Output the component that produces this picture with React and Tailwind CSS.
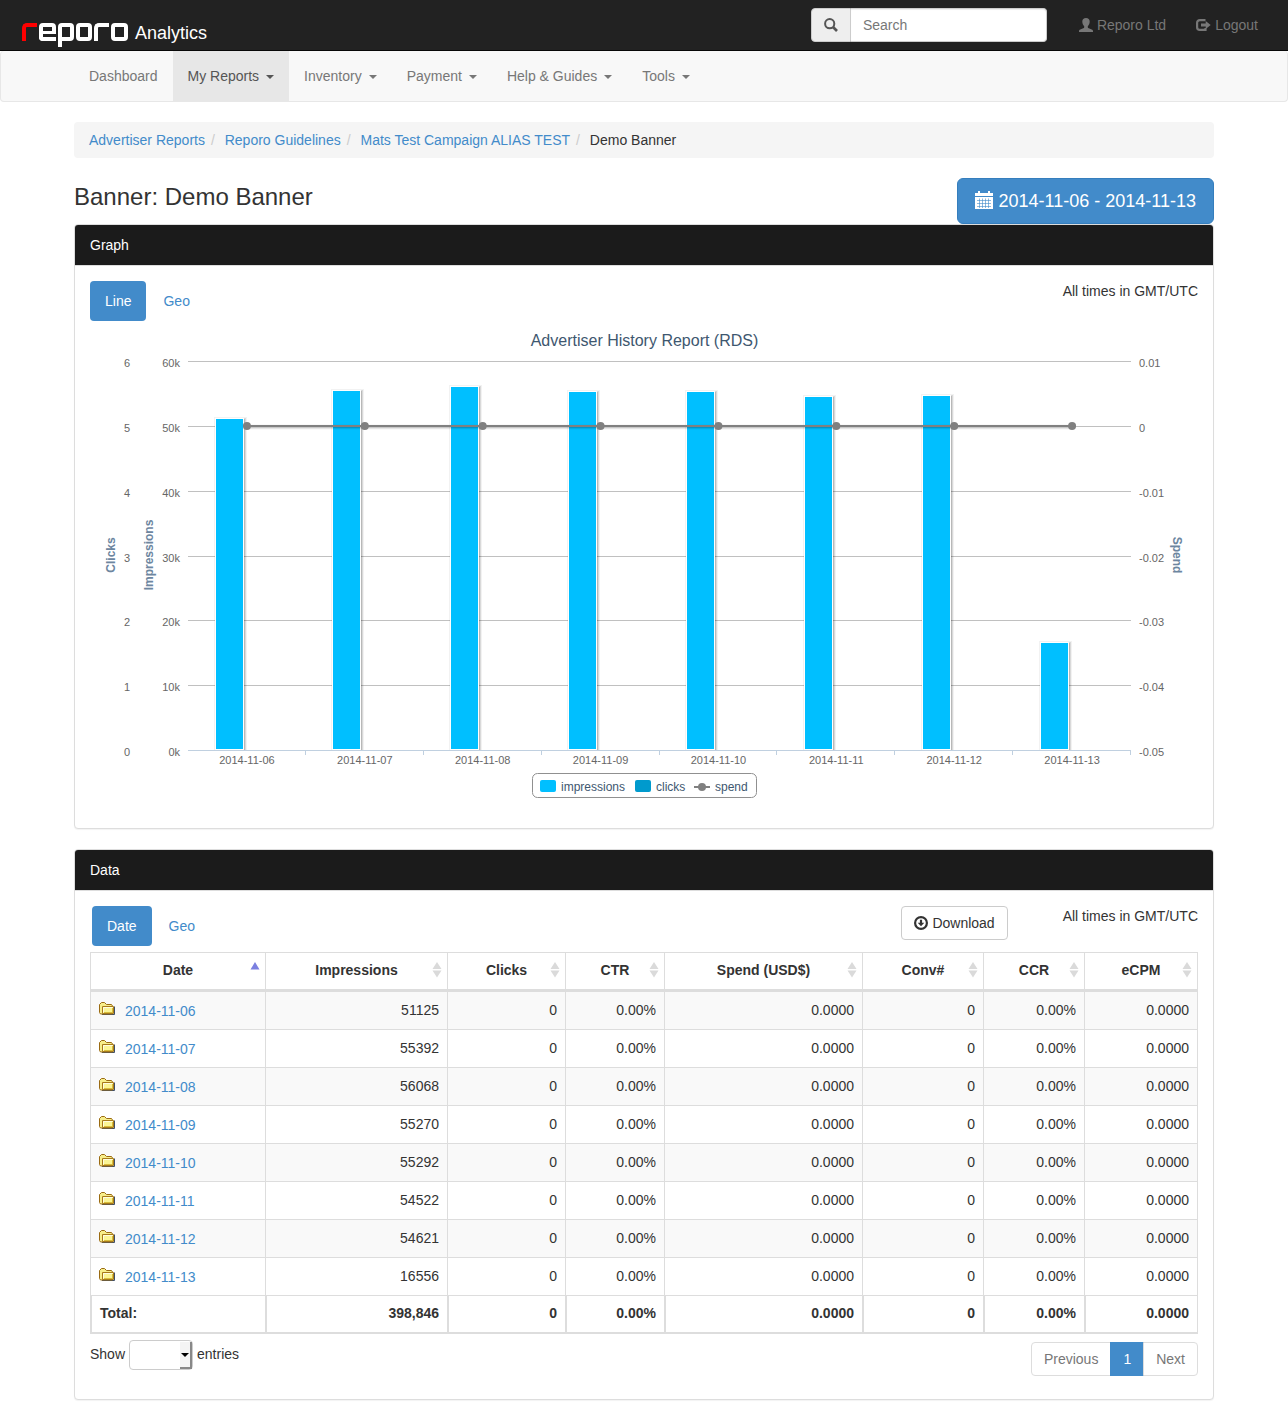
import React from "react";

const navItems = [
  { label: "Dashboard" },
  { label: "My Reports", menu: true, active: true },
  { label: "Inventory", menu: true },
  { label: "Payment", menu: true },
  { label: "Help & Guides", menu: true },
  { label: "Tools", menu: true },
];

const crumbs = ["Advertiser Reports", "Reporo Guidelines", "Mats Test Campaign ALIAS TEST"];

const rows = [
  { date: "2014-11-06", impressions: 51125 },
  { date: "2014-11-07", impressions: 55392 },
  { date: "2014-11-08", impressions: 56068 },
  { date: "2014-11-09", impressions: 55270 },
  { date: "2014-11-10", impressions: 55292 },
  { date: "2014-11-11", impressions: 54522 },
  { date: "2014-11-12", impressions: 54621 },
  { date: "2014-11-13", impressions: 16556 },
];

const columns = [
  { label: "Date", width: "w-[175px]" },
  { label: "Impressions", width: "w-[182px]" },
  { label: "Clicks", width: "w-[118px]" },
  { label: "CTR", width: "w-[99px]" },
  { label: "Spend (USD$)", width: "w-[198px]" },
  { label: "Conv#", width: "w-[121px]" },
  { label: "CCR", width: "w-[101px]" },
  { label: "eCPM", width: "w-[113px]" },
];

function Logo() {
  return (
    <span role="img" aria-label="reporo" className="flex h-6 items-start gap-[2px]">
      <span className="h-[18px] w-[15px] rounded-tl-[5px] border-t-4 border-l-4 border-[#f00]" />
      <span className="flex h-[18px] w-[17px] flex-col">
        <span className="h-[11px] rounded-t-[4px] border-x-4 border-t-4 border-b-3 border-white" />
        <span className="h-[7px] rounded-bl-[4px] border-b-4 border-l-4 border-white" />
      </span>
      <span className="flex h-6 w-4 flex-col">
        <span className="h-[18px] rounded-t-[4px] rounded-br-[4px] border-4 border-white" />
        <span className="h-[6px] w-1 bg-white" />
      </span>
      <span className="h-[18px] w-4 rounded-[4px] border-4 border-white" />
      <span className="h-[18px] w-[15px] rounded-tl-[5px] border-t-4 border-l-4 border-white" />
      <span className="h-[18px] w-[17px] rounded-[4px] border-4 border-white" />
    </span>
  );
}

function SearchIcon() {
  return (
    <svg width="14" height="14" viewBox="0 0 14 14" fill="none" stroke="currentColor" aria-hidden="true">
      <circle cx="5.7" cy="5.7" r="4.6" strokeWidth="2" />
      <path d="M9 9l4 4" strokeWidth="2.6" />
    </svg>
  );
}

function UserIcon() {
  return (
    <svg width="14" height="14" viewBox="0 0 14 14" fill="currentColor" aria-hidden="true">
      <path d="M7 0C4.700 0 3.300 1.400 3.300 3.600c0 1.900.8 3.700 1.900 4.600v1c0 .5-.4.800-1 1.100L1.300 11.500C.4 11.900 0 12.400 0 13.100V14h14v-.9c0-.7-.4-1.200-1.300-1.600l-2.900-1.200c-.6-.3-1-.6-1-1.100v-1c1.100-.9 1.900-2.700 1.900-4.600C10.700 1.400 9.300 0 7 0z" />
    </svg>
  );
}

function LogoutIcon() {
  return (
    <svg width="15" height="14" viewBox="0 0 15 14" aria-hidden="true">
      <path d="M9.500 2.100H3.800A2.700 2.700 0 0 0 1.100 4.800v4.400a2.700 2.700 0 0 0 2.700 2.700h5.700V10" fill="none" stroke="currentColor" strokeWidth="2.200" />
      <path d="M9.700 3l5 4-5 4V8.500H5v-3h4.700z" fill="currentColor" />
    </svg>
  );
}

function CalendarIcon() {
  return (
    <svg width="18" height="18" viewBox="0 0 18 18" aria-hidden="true" className="mb-[2px]">
      <path d="M0 2h3V0h2v2h8V0h2v2h3v3H0z" fill="currentColor" />
      <path d="M0 6h18v12H0z" fill="currentColor" />
      <path d="M2 9.500h14M2 12.500h14M2 15.500h14M4.500 7.500V17M7.500 7.500V17M10.500 7.500V17M13.500 7.500V17" stroke="#428bca" strokeWidth="0.600" />
    </svg>
  );
}

function DownloadIcon() {
  return (
    <svg width="14" height="14" viewBox="0 0 14 14" aria-hidden="true">
      <circle cx="7" cy="7" r="5.900" fill="none" stroke="currentColor" strokeWidth="2.200" />
      <path d="M5.900 3.800h2.200v3h2.200L7 10.200 3.700 6.800h2.200z" fill="currentColor" />
    </svg>
  );
}

function FolderIcon() {
  return (
    <svg width="16" height="13" viewBox="0 0 16 13" aria-hidden="true" className="mb-[2px] shrink-0">
      <path d="M3 12.500h12.500V4.500" fill="none" stroke="#3f4f66" />
      <path d="M.5 10.500v-8l2-2h3l2 2h5l1 1.500v8h-12z" fill="#f7ee8a" stroke="#9a6a12" />
      <path d="M3.500 11.500v-7h11v7z" fill="#fbf595" stroke="#a87a1a" />
      <path d="M4.500 10.500v-5h9" fill="none" stroke="#fffde0" />
      <path d="M5 10.500h9M13.500 6v5" fill="none" stroke="#d8bd3c" />
    </svg>
  );
}

function SortIcon({ ascending }) {
  return ascending ? (
    <svg width="10" height="16" viewBox="0 0 10 16" aria-hidden="true">
      <path d="M5 0l4.500 7.500h-9z" fill="#7b80e0" />
    </svg>
  ) : (
    <svg width="10" height="16" viewBox="0 0 10 16" aria-hidden="true">
      <path d="M5 0l4.500 7h-9zM5 15.500L.5 8.500h9z" fill="#dadada" />
    </svg>
  );
}

const gridY = [40.5, 105.5, 170.5, 235.5, 299.5, 364.5, 429.5];
const spendTicks = ["0.01", "0", "-0.01", "-0.02", "-0.03", "-0.04", "-0.05"];
const shadows = [
  { width: 5, opacity: 0.05 },
  { width: 3, opacity: 0.1 },
  { width: 1, opacity: 0.15 },
];
const step = 943 / 8;
const centre = (i) => 98 + step * (i + 0.5);

function Chart() {
  return (
    <svg
      viewBox="0 0 1108 492"
      className="block w-full font-['Liberation_Sans',Arial,sans-serif]"
      role="img"
      aria-label="Advertiser History Report (RDS)"
    >
      <clipPath id="plot-area">
        <rect x="98" y="40" width="943" height="389" />
      </clipPath>
      <text x="554.5" y="25" textAnchor="middle" fontSize="16" fill="#3e576f">
        Advertiser History Report (RDS)
      </text>
      {gridY.map((y, i) => (
        <g key={y} fontSize="11" fill="#666">
          <path d={`M98 ${y}H1041`} stroke={i === 6 ? "#c0d0e0" : "#c0c0c0"} />
          <text x="40" y={y + 5.5} textAnchor="end">{6 - i}</text>
          <text x="90" y={y + 5.5} textAnchor="end">{i === 6 ? "0k" : `${6 - i}0k`}</text>
          <text x="1049" y={y + 5.5}>{spendTicks[i]}</text>
        </g>
      ))}
      <g fontSize="12" fontWeight="bold" fill="#6d869f" textAnchor="middle">
        <text transform="translate(25 234) rotate(-90)">Clicks</text>
        <text transform="translate(63 234) rotate(-90)">Impressions</text>
        <text transform="translate(1083 234) rotate(90)">Spend</text>
      </g>
      <g clipPath="url(#plot-area)">
        {rows.map((row, i) => {
          const x = Math.round(centre(i) - 31.4) - 0.5;
          const h = Math.floor((row.impressions / 60000) * 389);
          const y = 428.5 - h;
          return (
            <g key={row.date}>
              {shadows.map((s) => (
                <rect key={s.width} x={x + 1} y={y + 1} width="28" height={h} fill="none" stroke="#000" strokeOpacity={s.opacity} strokeWidth={s.width} />
              ))}
              <rect x={x} y={y} width="28" height={h} fill="#00bfff" stroke="#fff" />
            </g>
          );
        })}
      </g>
      {rows.map((row, i) => (
        <g key={row.date}>
          <path d={`M${Math.round(98 + step * (i + 1)) - 0.5} 430v4`} stroke="#c0d0e0" />
          <text x={centre(i)} y="443" fontSize="11" fill="#666" textAnchor="middle">{row.date}</text>
        </g>
      ))}
      {shadows.map((s) => (
        <path key={s.width} d={`M${centre(0) + 1} 106H${centre(7) + 1}`} stroke="#000" strokeOpacity={s.opacity} strokeWidth={s.width} />
      ))}
      <path d={`M${centre(0)} 105H${centre(7)}`} stroke="#808080" strokeWidth="2" />
      {rows.map((row, i) => (
        <circle key={row.date} cx={centre(i)} cy="105" r="4" fill="#808080" />
      ))}
      <rect x="442.5" y="452.5" width="224" height="24" rx="5" fill="#fff" stroke="#909090" />
      <rect x="450" y="459" width="16" height="12" rx="2" fill="#00bfff" />
      <rect x="545" y="459" width="16" height="12" rx="2" fill="#009acd" />
      <path d="M604 466h16" stroke="#808080" strokeWidth="2" />
      <circle cx="612" cy="466" r="4" fill="#808080" />
      <g fontSize="12" fill="#3e576f">
        <text x="471" y="470">impressions</text>
        <text x="566" y="470">clicks</text>
        <text x="625" y="470">spend</text>
      </g>
    </svg>
  );
}

function Panel({ title, children }) {
  return (
    <section className="mb-5 rounded border border-[#ddd] bg-white shadow-[0_1px_1px_rgba(0,0,0,0.05)]">
      <h2 className="rounded-t-[3px] border-b border-[#ddd] bg-[#1b1b1b] px-[15px] py-[10px] text-white">{title}</h2>
      <div className="p-[15px]">{children}</div>
    </section>
  );
}

function Pills({ items }) {
  return (
    <ul className="flex gap-[2px]">
      {items.map((label, i) => (
        <li key={label}>
          <a
            href="#"
            className={
              i === 0
                ? "block rounded bg-[#428bca] px-[15px] py-[10px] text-white"
                : "block rounded px-[15px] py-[10px] text-[#428bca]"
            }
          >
            {label}
          </a>
        </li>
      ))}
    </ul>
  );
}

function DataTable() {
  const zeros = ["0", "0.00%", "0.0000", "0", "0.00%", "0.0000"];
  return (
    <table className="mt-[6px] w-full table-fixed border-separate border-spacing-0 border-r border-[#ddd]">
      <colgroup>
        {columns.map((c) => (
          <col key={c.label} className={c.width} />
        ))}
      </colgroup>
      <thead>
        <tr>
          {columns.map((c, i) => (
            <th key={c.label} scope="col" className="border-t border-b-3 border-l border-[#ddd] px-[5px] pt-[7px] pb-[9px] font-bold">
              <div className="grid grid-cols-[10px_1fr_10px] items-center">
                <span className="col-start-2">{c.label}</span>
                <SortIcon ascending={i === 0} />
              </div>
            </th>
          ))}
        </tr>
      </thead>
      <tbody>
        {rows.map((row) => (
          <tr key={row.date} className="h-[38px] odd:bg-[#f9f9f9]">
            <td className="border-b border-l border-[#ddd] px-2 pb-[2px]">
              <div className="flex items-center gap-[10px]">
                <FolderIcon />
                <a href="#" className="pt-[2px] text-[#428bca]">{row.date}</a>
              </div>
            </td>
            <td className="border-b border-l border-[#ddd] px-2 pb-[2px] text-right">{row.impressions}</td>
            {zeros.map((z, i) => (
              <td key={i} className="border-b border-l border-[#ddd] px-2 pb-[2px] text-right">{z}</td>
            ))}
          </tr>
        ))}
      </tbody>
      <tfoot>
        <tr>
          <th scope="row" className="border-b-2 border-l-2 border-[#ddd] px-2 pt-[7px] pb-[9px] text-left font-bold">Total:</th>
          {["398,846", ...zeros].map((v, i) => (
            <td key={i} className="border-b-2 border-l-2 border-[#ddd] px-2 pt-[7px] pb-[9px] text-right font-bold">{v}</td>
          ))}
        </tr>
      </tfoot>
    </table>
  );
}

export default function App() {
  return (
    <div className="bg-white font-['Liberation_Sans',Arial,sans-serif] text-sm leading-5 text-[#333]">
      <header className="flex h-[51px] items-start justify-between border-b border-[#080808] bg-[#222] pr-[15px] pl-[22px]">
        <a href="#" className="flex items-start gap-[7px] pt-[23px] text-lg leading-5 text-white">
          <Logo />
          <span>Analytics</span>
        </a>
        <div className="flex">
          <form className="mt-2 mr-[17px] flex h-[34px] w-[236px]">
            <label htmlFor="search" className="flex w-10 items-center justify-center rounded-l border border-[#ccc] bg-[#eee] text-[#555]">
              <SearchIcon />
            </label>
            <input
              id="search"
              type="text"
              placeholder="Search"
              className="min-w-0 flex-1 rounded-r border border-l-0 border-[#ccc] bg-white px-3 text-sm shadow-[inset_0_1px_1px_rgba(0,0,0,0.075)] placeholder:text-[#777]"
            />
          </form>
          <a href="#" className="flex items-center gap-1 px-[15px] py-[15px] text-[#777]">
            <UserIcon />
            Reporo Ltd
          </a>
          <a href="#" className="flex items-center gap-1 px-[15px] py-[15px] text-[#777]">
            <LogoutIcon />
            Logout
          </a>
        </div>
      </header>

      <nav className="mb-5 rounded border border-t-0 border-[#e7e7e7] bg-[#f8f8f8]">
        <ul className="mx-auto flex max-w-[1170px] px-[15px]">
          {navItems.map((item) => (
            <li key={item.label}>
              <a
                href="#"
                className={
                  item.active
                    ? "flex items-center gap-[7px] bg-[#e7e7e7] p-[15px] text-[#555]"
                    : "flex items-center gap-[7px] p-[15px] text-[#777]"
                }
              >
                {item.label}
                {item.menu && <span className="mt-[2px] border-x-4 border-t-4 border-x-transparent border-t-current" />}
              </a>
            </li>
          ))}
        </ul>
      </nav>

      <main className="mx-auto max-w-[1170px] px-[15px]">
        <ol className="mb-5 flex rounded bg-[#f5f5f5] px-[15px] py-2">
          {crumbs.map((c) => (
            <li key={c} className="flex">
              <a href="#" className="text-[#428bca]">{c}</a>
              <span className="px-[6px] text-[#ccc]">/&nbsp;</span>
            </li>
          ))}
          <li>Demo Banner</li>
        </ol>

        <div className="flex items-start justify-between">
          <h1 className="pt-[6px] text-2xl leading-[26px]">Banner: Demo Banner</h1>
          <button type="button" className="flex items-center gap-[6px] rounded-md border border-[#357ebd] bg-[#428bca] px-[17px] py-[10px] text-lg leading-6 text-white">
            <CalendarIcon />
            2014-11-06 - 2014-11-13
          </button>
        </div>

        <Panel title="Graph">
          <div className="flex items-start justify-between">
            <Pills items={["Line", "Geo"]} />
            <span>All times in GMT/UTC</span>
          </div>
          <Chart />
        </Panel>

        <Panel title="Data">
          <div className="flex items-start pl-[2px]">
            <Pills items={["Date", "Geo"]} />
            <button type="button" className="mr-[55px] ml-auto flex items-center gap-1 rounded border border-[#ccc] bg-white px-3 py-[6px]">
              <DownloadIcon />
              Download
            </button>
            <span>All times in GMT/UTC</span>
          </div>
          <DataTable />
          <div className="flex items-start justify-between pt-[6px] pb-2">
            <div className="flex items-start gap-1">
              <label htmlFor="entries" className="pt-1">Show</label>
              <span className="relative h-[30px] w-16">
                <select id="entries" defaultValue="" className="h-full w-full appearance-none rounded border border-[#ccc] bg-white">
                  <option value=""></option>
                </select>
                <span className="pointer-events-none absolute top-[2px] right-[1px] bottom-[1px] flex w-3 items-center justify-center border-r-2 border-b-2 border-[#888] bg-[#f4f4f4]">
                  <span className="border-x-4 border-t-4 border-x-transparent border-t-black" />
                </span>
              </span>
              <span className="pt-1">entries</span>
            </div>
            <div className="mt-[2px] flex">
              <a href="#" className="rounded-l border border-[#ddd] px-3 py-[6px] text-[#777]">Previous</a>
              <a href="#" className="-ml-px border border-[#428bca] bg-[#428bca] px-3 py-[6px] text-white">1</a>
              <a href="#" className="-ml-px rounded-r border border-[#ddd] px-3 py-[6px] text-[#777]">Next</a>
            </div>
          </div>
        </Panel>
      </main>
    </div>
  );
}
